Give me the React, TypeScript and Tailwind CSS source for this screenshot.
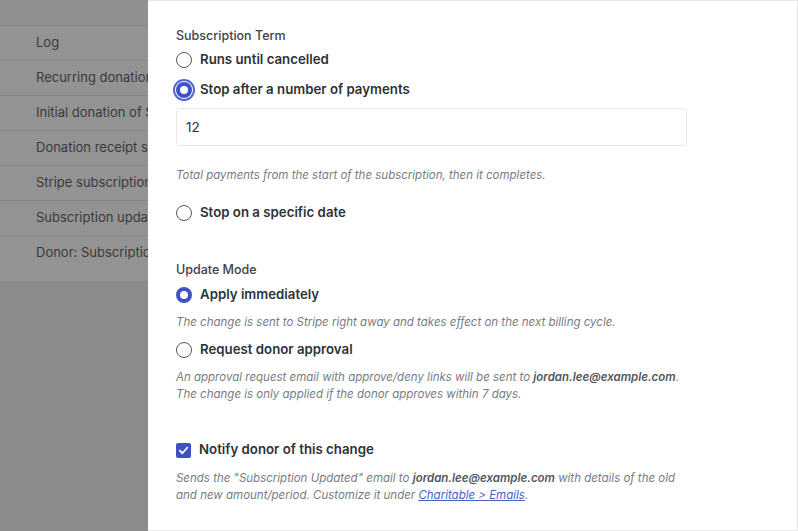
import React from "react";

type LogRow = {
  label: string;
  tall?: boolean;
};

const logRows: LogRow[] = [
  { label: "Log" },
  { label: "Recurring donation created" },
  { label: "Initial donation of $25.00 received" },
  { label: "Donation receipt sent to donor" },
  { label: "Stripe subscription activated" },
  { label: "Subscription updated by admin" },
  { label: "Donor: Subscription Updated email sent", tall: true },
];

const Radio = ({ checked, focused }: { checked?: boolean; focused?: boolean }) => {
  if (!checked) {
    return <span className="block w-4 h-4 shrink-0 rounded-full border border-[#50575e] bg-white" />;
  }
  return (
    <span
      className={
        focused
          ? "block w-4 h-4 shrink-0 rounded-full border-[4px] border-[#3f51c6] bg-white ring-2 ring-[#5566cc] ring-offset-1"
          : "block w-4 h-4 shrink-0 rounded-full border-[4px] border-[#3f51c6] bg-white"
      }
    />
  );
};

const Option = ({
  label,
  checked,
  focused,
  className,
}: {
  label: string;
  checked?: boolean;
  focused?: boolean;
  className?: string;
}) => (
  <label className={`flex items-center gap-2 h-5 ${className ?? ""}`}>
    <Radio checked={checked} focused={focused} />
    <span className="text-[13.25px] font-semibold text-[#2c3338]">{label}</span>
  </label>
);

const Help = ({ children, className }: { children: React.ReactNode; className?: string }) => (
  <p className={`text-[11.5px] leading-[17px] italic text-[#787c82] ${className ?? ""}`}>{children}</p>
);

export default function App() {
  return (
    <div className="flex w-[798px] h-[531px] overflow-hidden font-['Inter',sans-serif]">
      {/* dimmed log table behind the drawer */}
      <div className="w-[148px] shrink-0 bg-[#8b8b8b] flex flex-col">
        <div className="h-[26px] bg-[#909090] border-b border-[#848484]" />
        {logRows.map((row, i) => (
          <div
            key={i}
            className={`bg-[#939393] border-b border-[#868686] pl-9 overflow-hidden whitespace-nowrap text-[13px] text-[#3a3a3a] ${
              row.tall ? "h-[47px] pt-[7px]" : "h-[35px] flex items-center"
            }`}
          >
            {row.label}
          </div>
        ))}
      </div>

      {/* drawer */}
      <div className="flex-1 bg-white border-t border-r border-b border-[#e8e8e8] pl-[28px] pt-[27px]">
        <h3 className="text-[12.5px] leading-4 font-medium text-[#3c434a]">Subscription Term</h3>
        <Option className="mt-[6px]" label="Runs until cancelled" />
        <Option className="mt-[10px]" label="Stop after a number of payments" checked focused />
        <input
          readOnly
          value="12"
          className="mt-[8px] block w-[511px] h-[38px] rounded-[4px] border border-[#e6e7e9] pl-[9px] text-[13.5px] text-[#2c3338] outline-none"
        />
        <Help className="mt-[21px]">
          Total payments from the start of the subscription, then it completes.
        </Help>
        <Option className="mt-[19px]" label="Stop on a specific date" />

        <h3 className="mt-[39px] text-[12.5px] leading-4 font-medium text-[#3c434a]">Update Mode</h3>
        <Option className="mt-[7px]" label="Apply immediately" checked />
        <Help className="mt-[9px]">
          The change is sent to Stripe right away and takes effect on the next billing cycle.
        </Help>
        <Option className="mt-[9px]" label="Request donor approval" />
        <Help className="mt-[9px]">
          An approval request email with approve/deny links will be sent to{" "}
          <strong className="font-semibold text-[#50575e]">jordan.lee@example.com</strong>.
          <br />
          The change is only applied if the donor approves within 7 days.
        </Help>

        <label className="mt-[37px] flex items-center gap-2 h-5">
          <span className="flex items-center justify-center w-[15px] h-[15px] rounded-[2px] bg-[#3f51c6]">
            <svg viewBox="0 0 12 12" className="w-[11px] h-[11px]" fill="none">
              <path d="M2 6.2 4.8 9 10 3" stroke="white" strokeWidth="2" strokeLinecap="round" strokeLinejoin="round" />
            </svg>
          </span>
          <span className="text-[13.25px] font-semibold text-[#2c3338]">Notify donor of this change</span>
        </label>
        <Help className="mt-[10px]">
          Sends the "Subscription Updated" email to{" "}
          <strong className="font-semibold text-[#50575e]">jordan.lee@example.com</strong> with details of the old
          <br />
          and new amount/period. Customize it under{" "}
          <a href="#" className="text-[#4a5fc1] underline">
            Charitable &gt; Emails
          </a>
          .
        </Help>
      </div>
    </div>
  );
}
